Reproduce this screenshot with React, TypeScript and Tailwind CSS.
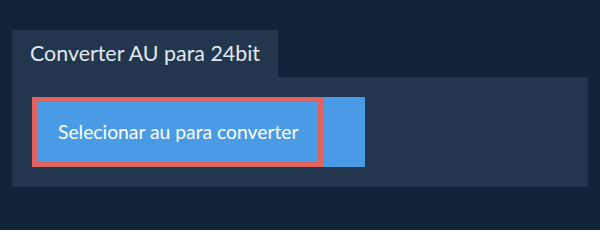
import React from "react";

export default function App() {
  return (
    <div className="w-[600px] h-[230px] bg-[#10243a] pt-[30px] px-3 font-['Lato',sans-serif]">
      <div className="flex">
        <div className="h-[47px] w-[266px] bg-[#22374e] pl-[18px] flex items-center text-[21.4px] text-[#e3e8ee]">
          Converter AU para 24bit
        </div>
      </div>
      <div className="bg-[#22374e] h-[110px] p-5">
        <button className="flex h-[70px] w-[333px] bg-[#4a9be6] text-left">
          <span className="flex items-center h-full w-[291px] border-[5px] border-[#df625e] pl-[21px] pt-px text-[19.3px] text-white">
            Selecionar au para converter
          </span>
        </button>
      </div>
    </div>
  );
}
